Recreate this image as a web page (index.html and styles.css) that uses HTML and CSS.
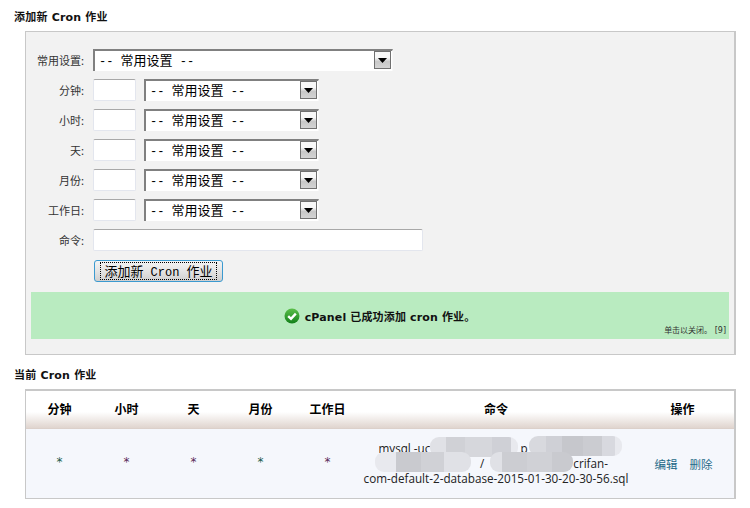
FILE: index.html
```html
<!DOCTYPE html>
<html lang="zh">
<head>
<meta charset="utf-8">
<title>Cron 作业</title>
<link rel="stylesheet" href="styles.css">
</head>
<body>
<h2 class="title title-add">添加新 Cron 作业</h2>
<form class="panel">
  <div class="row row-first">
    <label class="label">常用设置:</label>
    <div class="select select-wide"><span class="select-text">--&nbsp;<span class="cjk">常用设置</span>&nbsp;--</span><span class="arrow"><svg width="9" height="5" viewBox="0 0 9 5"><path d="M0 0h9L4.5 5z" fill="#000"/></svg></span></div>
  </div>
  <div class="row">
    <label class="label">分钟:</label><input class="input input-small" type="text">
    <div class="select"><span class="select-text">--&nbsp;<span class="cjk">常用设置</span>&nbsp;--</span><span class="arrow"><svg width="9" height="5" viewBox="0 0 9 5"><path d="M0 0h9L4.5 5z" fill="#000"/></svg></span></div>
  </div>
  <div class="row">
    <label class="label">小时:</label><input class="input input-small" type="text">
    <div class="select"><span class="select-text">--&nbsp;<span class="cjk">常用设置</span>&nbsp;--</span><span class="arrow"><svg width="9" height="5" viewBox="0 0 9 5"><path d="M0 0h9L4.5 5z" fill="#000"/></svg></span></div>
  </div>
  <div class="row">
    <label class="label">天:</label><input class="input input-small" type="text">
    <div class="select"><span class="select-text">--&nbsp;<span class="cjk">常用设置</span>&nbsp;--</span><span class="arrow"><svg width="9" height="5" viewBox="0 0 9 5"><path d="M0 0h9L4.5 5z" fill="#000"/></svg></span></div>
  </div>
  <div class="row">
    <label class="label">月份:</label><input class="input input-small" type="text">
    <div class="select"><span class="select-text">--&nbsp;<span class="cjk">常用设置</span>&nbsp;--</span><span class="arrow"><svg width="9" height="5" viewBox="0 0 9 5"><path d="M0 0h9L4.5 5z" fill="#000"/></svg></span></div>
  </div>
  <div class="row">
    <label class="label">工作日:</label><input class="input input-small" type="text">
    <div class="select"><span class="select-text">--&nbsp;<span class="cjk">常用设置</span>&nbsp;--</span><span class="arrow"><svg width="9" height="5" viewBox="0 0 9 5"><path d="M0 0h9L4.5 5z" fill="#000"/></svg></span></div>
  </div>
  <div class="row">
    <label class="label">命令:</label><input class="input input-command" type="text">
  </div>
  <div class="row row-button">
    <button class="button" type="button"><span class="button-text"><span class="cjk">添加新</span> Cron <span class="cjk">作业</span></span></button>
  </div>
  <div class="notice">
    <div class="notice-main">
      <svg class="notice-icon" width="16" height="16" viewBox="0 0 16 16">
        <defs><linearGradient id="ok" x1="0" y1="0" x2="0" y2="1"><stop offset="0" stop-color="#5cc04a"/><stop offset="1" stop-color="#12801a"/></linearGradient></defs>
        <circle cx="8" cy="8" r="7.5" fill="url(#ok)"/>
        <path d="M4.2 8.2 7 10.8 11.8 5.6" fill="none" stroke="#fff" stroke-width="2.4"/>
      </svg>
      <span>cPanel 已成功添加 cron 作业。</span>
    </div>
    <div class="notice-close">单击以关闭。 [9]</div>
  </div>
</form>
<h2 class="title title-current">当前 Cron 作业</h2>
<table class="jobs">
  <thead>
    <tr><th class="col">分钟</th><th class="col">小时</th><th class="col">天</th><th class="col">月份</th><th class="col">工作日</th><th class="col-command">命令</th><th>操作</th></tr>
  </thead>
  <tbody>
    <tr>
      <td class="star star-green">*</td><td class="star star-purple">*</td><td class="star star-purple">*</td><td class="star star-green">*</td><td class="star star-purple">*</td>
      <td class="command">
        <div class="command-text">mysql -uc<span class="gap gap-a"></span>p<span class="gap gap-b"></span><br><span class="gap gap-c"></span>/<span class="gap gap-d"></span>crifan-<br>com-default-2-database-2015-01-30-20-30-56.sql</div>
        <div class="mask mask-one"></div>
        <div class="mask mask-three"></div>
        <div class="mask mask-two"></div>
        <div class="mask mask-four"></div>
      </td>
      <td class="actions"><a class="link" href="#">编辑</a><a class="link" href="#">删除</a></td>
    </tr>
  </tbody>
</table>
</body>
</html>
```
FILE: styles.css
```css
html, body { margin: 0; padding: 0; background: #fff; }
body {
  width: 750px;
  height: 508px;
  overflow: hidden;
  font-family: "DejaVu Sans", "Noto Sans CJK SC", sans-serif;
  font-size: 11px;
  color: #222;
}
.title {
  margin: 0;
  padding-left: 14px;
  font-size: 11px;
  line-height: 14px;
  font-weight: bold;
  color: #111;
  letter-spacing: 0.2px;
}
.title-add { padding-top: 11px; padding-bottom: 6px; }
.title-current { padding-top: 14px; padding-bottom: 6px; }
.panel {
  box-sizing: border-box;
  width: 711px;
  height: 324px;
  margin-left: 25px;
  padding: 17px 5px 0;
  background: #f2f2f2;
  border: 1px solid #c8c8c8;
  border-right-width: 2px;
}
.row {
  display: flex;
  align-items: center;
  height: 22px;
  margin-top: 8px;
}
.row-first { margin-top: 0; }
.label {
  width: 53px;
  margin-right: 9px;
  text-align: right;
  font-size: 11px;
  font-family: "Noto Sans CJK SC", sans-serif;
  color: #333;
  white-space: nowrap;
}
.input {
  box-sizing: border-box;
  height: 22px;
  margin: 0;
  padding: 0;
  background: #fff;
  border: 1px solid #e3e6ee;
  border-top-color: #a8a8a8;
  border-radius: 2px;
}
.input-small { width: 43px; margin-right: 8px; }
.input-command { width: 330px; }
.select {
  box-sizing: border-box;
  position: relative;
  width: 175px;
  height: 22px;
  background: #fff;
  border-top: 2px solid #808080;
  border-left: 2px solid #808080;
  border-right: 1px solid #f8f8f8;
  padding-left: 4px;
  font-family: "Liberation Mono", "Noto Sans CJK SC", monospace;
  font-size: 12px;
  line-height: 17px;
  color: #000;
  white-space: nowrap;
}
.select-wide { width: 300px; }
.cjk { font-size: 13px; font-family: "Noto Sans CJK SC", sans-serif; }
.select-text { display: block; height: 18px; overflow: hidden; }
.arrow {
  box-sizing: border-box;
  position: absolute;
  top: 0;
  right: 1px;
  width: 17px;
  height: 18px;
  display: flex;
  align-items: center;
  justify-content: center;
  border: 1px solid #707070;
  background: linear-gradient(#f8f8f8 35%, #c8c8c8 60%, #d4d4d4);
}
.row-button { margin-top: 9px; padding-left: 63px; }
.button {
  box-sizing: border-box;
  width: 129px;
  height: 22px;
  padding: 1px;
  background: linear-gradient(#f4f4f4, #e4e4e4 50%, #cfcfcf);
  border: 1px solid #3b9ad0;
  border-radius: 3px;
  font-family: "Liberation Mono", "Noto Sans CJK SC", monospace;
  font-size: 12px;
  color: #000;
}
.button-text {
  display: block;
  line-height: 16px;
  height: 18px;
  box-sizing: border-box;
  margin: 0 4px;
  border: 1px dotted #000;
  white-space: nowrap;
}
.notice {
  position: relative;
  height: 47px;
  margin-top: 10px;
  background: #b9ebc0;
}
.notice-main {
  display: flex;
  align-items: center;
  justify-content: center;
  gap: 5px;
  height: 47px;
  font-weight: bold;
  font-size: 11px;
  color: #111;
  padding-right: 1px;
  letter-spacing: 0.15px;
}
.notice-icon { flex: none; }
.notice-close {
  position: absolute;
  right: 3px;
  bottom: 2px;
  font-size: 8px;
  line-height: 12px;
  color: #333;
}
.jobs {
  box-sizing: border-box;
  width: 711px;
  height: 110px;
  margin-left: 25px;
  border-collapse: separate;
  border-spacing: 0;
  table-layout: fixed;
  border: 1px solid #c8c8c8;
  border-top-width: 2px;
  border-right-width: 2px;
}
.jobs th {
  height: 38px;
  padding: 0 0 4px;
  box-sizing: border-box;
  font-size: 12px;
  font-weight: bold;
  color: #000;
  font-family: "Noto Sans CJK SC", sans-serif;
  background: linear-gradient(#fff 55%, #e0d5cf 97%, #d8ccc6);
}
.col { width: 67px; }
.col-command { width: 270px; }
.jobs td {
  padding: 0;
  background: #f5f7fc;
  text-align: center;
  vertical-align: middle;
}
.star { font-size: 12px; padding-bottom: 4px !important; font-family: "DejaVu Sans", sans-serif; }
.star-green { color: #1c5a4c; }
.star-purple { color: #5a2a58; }
.command { position: relative; }
.command-text {
  font-family: "Open Sans", sans-serif;
  font-size: 11.7px;
  line-height: 15px;
  color: #222;
  white-space: nowrap;
}
.gap { display: inline-block; height: 1px; }
.gap-a { width: 90px; }
.gap-b { width: 86px; }
.gap-c { width: 96px; }
.gap-d { width: 89px; }
.mask {
  position: absolute;
  border-radius: 9px;
  background-color: #e8e9ee;
}
.mask-one {
  left: 69px;
  top: 8px;
  width: 88px;
  height: 20px;
  background-image: linear-gradient(90deg, #e0e1e6 0 18%, #d0d1d6 18% 40%, #d6d7dc 40% 70%, #cfd0d6 70% 92%, transparent 92%);
}
.mask-three {
  left: 168px;
  top: 7px;
  width: 93px;
  height: 20px;
  background-image: linear-gradient(90deg, #d8d9de 0 18%, #cfd0d6 18% 35%, #c6c7cc 35% 58%, #cbccd1 58% 78%, #d8d9df 78% 92%, transparent 92%);
}
.mask-two {
  left: 14px;
  top: 23px;
  width: 96px;
  height: 20px;
  background-image: linear-gradient(90deg, #e8e9ee 0 22%, #c9cacf 22% 48%, #d0d1d6 48% 72%, #e0e1e6 72% 100%);
}
.mask-four {
  left: 129px;
  top: 23px;
  width: 83px;
  height: 20px;
  background-image: linear-gradient(90deg, #e0e1e6 0 15%, #cccdd2 15% 45%, #d0d1d6 45% 75%, #c9cacf 75% 100%);
}
.actions { white-space: nowrap; }
.link {
  color: #1f6a88;
  font-family: "Noto Sans CJK SC", sans-serif;
  font-size: 11.5px;
  text-decoration: none;
  margin: 0 6px;
  position: relative;
  left: 1px;
}
```
